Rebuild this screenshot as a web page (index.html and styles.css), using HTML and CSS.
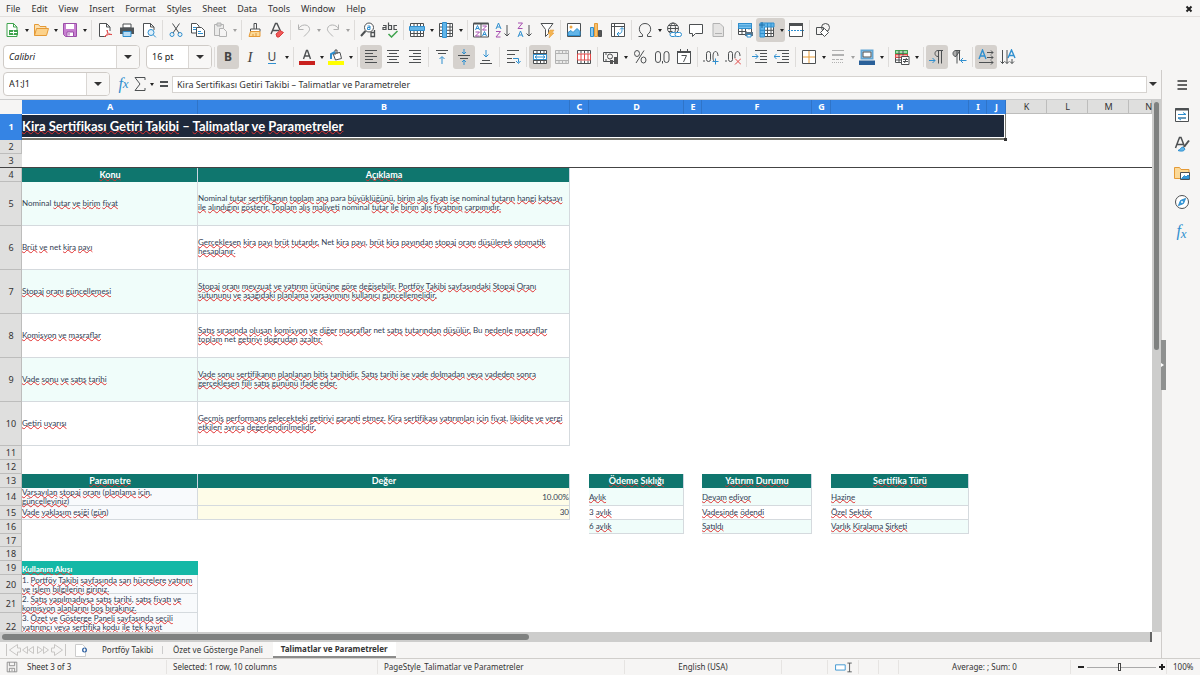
FILE: index.html
```html
<!DOCTYPE html>
<html lang="tr">
<head>
<meta charset="utf-8">
<title>Kira Sertifikası Getiri Takibi</title>
<link rel="stylesheet" href="styles.css">
</head>
<body>
<nav class="menu">
  <button>File</button><button>Edit</button><button>View</button><button>Insert</button><button>Format</button><button>Styles</button><button>Sheet</button><button>Data</button><button>Tools</button><button>Window</button><button>Help</button>
  <button class="close" aria-label="Close document"><svg viewBox="0 0 8 8" class="x"><path d="M1.500 1.500l5 5M6.500 1.500l-5 5"/></svg></button>
</nav>

<div class="bar">
  <button aria-label="New"><svg viewBox="0 0 16 16"><path class="g" d="M3 1.500h6.500l3.500 3.500v9.500h-10z" fill="#fff"/><path class="g" d="M9.500 1.500v3.500h3.500"/><path d="M5 8h9v5h-9z" fill="#3fa34d" stroke="none"/><path stroke="#fff" d="M6 10.500h7M9.500 8.500v4"/></svg></button><button class="arr" aria-label="New options"></button>
  <button aria-label="Open"><svg viewBox="0 0 16 16"><path d="M1.500 13.500v-11h4l1.500 2h6v3" fill="#fbe0b0" class="o"/><path d="M1.500 13.500l2-7h12l-2 7z" fill="#fcd28b" class="o"/></svg></button><button class="arr" aria-label="Open options"></button>
  <button aria-label="Save"><svg viewBox="0 0 16 16"><path d="M1.500 1.500h13v13h-11l-2-2z" fill="#c77fd0" stroke="#9b4fa8"/><path d="M4 2h8v5h-8z" fill="#fff" stroke="none"/><path d="M5 10h6.500v4.500h-6.500z" fill="#fff" stroke="#9b4fa8"/><path stroke="#9b4fa8" d="M7 11v2.500"/></svg></button><button class="arr" aria-label="Save options"></button>
  <i class="sep"></i>
  <button aria-label="Export as PDF"><svg viewBox="0 0 16 16"><path d="M9 14.500h-6.500v-13h7l3.500 3.500v4M9.500 1.500v3.500h3.500" fill="#fff"/><path class="r" d="M7.500 14.500c3-1 3.500-4.500 2.500-6.500c0 3 3 5 5 4.500c-2-.5-5 0-7.500 2z"/></svg></button>
  <button aria-label="Print"><svg viewBox="0 0 16 16"><path d="M4 2h8v4h-8z" fill="#fff"/><path d="M1 5.500h14v6.500h-14z" fill="#505558" stroke="none"/><path d="M4 9.500h8v5h-8z" fill="#b8dcf5" stroke="#2d8ccc"/></svg></button>
  <button aria-label="Print preview"><svg viewBox="0 0 16 16"><path d="M8 14.500h-5.500v-13h7l3.500 3.500v3M9.500 1.500v3.500h3.500" fill="#fff"/><circle class="b" cx="10" cy="10.500" r="3" fill="#dff0fb"/><path class="b" d="M12.300 12.800l2.500 2.500"/></svg></button>
  <i class="sep"></i>
  <button aria-label="Cut"><svg viewBox="0 0 16 16"><path d="M4.500 1.500l6.500 9.500M11.500 1.500l-6.500 9.500"/><circle class="b" cx="4" cy="12.500" r="2"/><circle class="b" cx="12" cy="12.500" r="2"/></svg></button>
  <button aria-label="Copy"><svg viewBox="0 0 16 16"><path d="M1.500 1.500h5l2.500 2.500v7h-7.500z" fill="#fff"/><path d="M6.500 5.500h5l3 3v6h-8z" fill="#fff"/><path class="b" d="M3 5.500h3M3 7.500h3M8 9.500h3M8 11.500h5"/></svg></button>
  <button class="dim" aria-label="Paste"><svg viewBox="0 0 16 16"><path d="M2.500 2.500h9v11h-9z" fill="#ddd"/><path d="M5 1h4v3h-4z" fill="#aaa"/><path d="M7.500 6.500h4l3 3v5h-7z" fill="#f4f4f4"/></svg></button><button class="arr dim" aria-label="Paste options"></button>
  <i class="sep"></i>
  <button aria-label="Clone formatting"><svg viewBox="0 0 16 16"><path d="M7 7v-5.500h2.500v5.500"/><path d="M3.500 9.500v-2.500h9.500v2.500z" fill="#fff"/><path class="o" d="M3.500 9.500h9.500v5h-11z" fill="#fbd998"/><path class="o" d="M6 14v-2M9 14v-3"/></svg></button>
  <button aria-label="Clear formatting"><svg viewBox="0 0 16 16"><path d="M2 12l4.500-10.500h1.500l3.500 7.500M4 8.500h6" stroke-width="1.400"/><path d="M7 12l4-3.500l3.500 2-4.500 4.500h-2z" fill="#ef5a5a" stroke="#dc3b3b"/></svg></button>
  <i class="sep"></i>
  <button class="dim" aria-label="Undo"><svg viewBox="0 0 16 16"><path d="M2.500 2.500v5h5M2.500 7c2-5 10-5.500 11-.5c.5 2-1 3.500-5.500 8"/></svg></button><button class="arr dim" aria-label="Undo options"></button>
  <button class="dim" aria-label="Redo"><svg viewBox="0 0 16 16"><path d="M13.500 2.500v5h-5M13.500 7c-2-5-10-5.500-11-.5c-.5 2 1 3.500 5.500 8"/></svg></button><button class="arr dim" aria-label="Redo options"></button>
  <i class="sep"></i>
  <button aria-label="Find and replace"><svg viewBox="0 0 16 16"><circle cx="9" cy="5.500" r="4.500" fill="#fff"/><path d="M5.500 9l-4.500 5" stroke-width="2"/><path class="b" d="M7.500 4h2.500v3.500h-2.500v-2h2.500"/><path d="M14.500 8v6.500h-3.500v-4h3.500" stroke-width="1.300"/></svg></button>
  <button aria-label="Spelling"><svg viewBox="0 0 16 16"><path stroke-width="1.200" d="M1 3.500h3v4h-3v-2h3M6.500 .5v7h3v-4h-3M15 3.500h-3v4h3"/><path class="g" stroke-width="1.500" d="M6.500 12l3 3l6-6"/></svg></button>
  <i class="sep"></i>
  <button aria-label="Row"><svg viewBox="0 0 16 16"><path d="M1.500 1.500h13v13h-13zM1.500 11.500h13M5 1.500v13M8.300 1.500v13M11.500 1.500v13" fill="#fff"/><path class="b" d="M.5 4.500h15v4h-15z" fill="#62b5e8"/></svg></button><button class="arr" aria-label="Row options"></button>
  <button aria-label="Column"><svg viewBox="0 0 16 16"><path d="M1.500 1.500h13v13h-13zM1.500 5h13M1.500 8.300h13M1.500 11.500h13M12 1.500v13" fill="#fff"/><path class="b" d="M4.500 .5h4v15h-4z" fill="#62b5e8"/></svg></button><button class="arr" aria-label="Column options"></button>
  <i class="sep"></i>
  <button aria-label="Sort"><svg viewBox="0 0 16 16"><path d="M.5 1.500h15v13.500h-15zM8 2v13" fill="#fff"/><path d="M.5 1.500h15" stroke-width="2"/><path class="b" d="M2.500 8l2-4.500l2 4.500M3 6.500h3M9.500 14l2-4.500l2 4.500M10 12.500h3"/><path class="p" d="M9.500 4h4l-4 4h4M2.500 10h4l-4 4h4"/></svg></button>
  <button aria-label="Sort ascending"><svg viewBox="0 0 16 16"><path class="b" d="M1 7l2.500-6l2.500 6M2 5h3"/><path class="p" d="M1 9.500h4.500l-4.500 5.500h4.500"/><path d="M12 3v11M9.500 11.500l2.500 2.500l2.500-2.500"/></svg></button>
  <button aria-label="Sort descending"><svg viewBox="0 0 16 16"><path class="p" d="M1 1h4.500l-4.500 5.500h4.500"/><path class="b" d="M1 15l2.500-6l2.500 6M2 13h3"/><path d="M12 3v11M9.500 11.500l2.500 2.500l2.500-2.500"/></svg></button>
  <button aria-label="AutoFilter"><svg viewBox="0 0 16 16"><path d="M2 1.500h12l-4.500 6v4l-3 3v-7z" fill="#fff"/><path d="M11 8h4l-2 3h2l-5 5l1-4h-2z" fill="#f4b453" stroke="#e59a36" stroke-width=".5"/></svg></button>
  <i class="sep"></i>
  <button aria-label="Insert image"><svg viewBox="0 0 16 16"><path d="M1.500 1.500h13v13h-13z" fill="#fff"/><circle cx="5" cy="5" r="1.500" fill="#f0a742" stroke="none"/><path class="b" d="M2 13.500v-3l3-2l2 2l4-4l3 3v4z" fill="#62b5e8"/></svg></button>
  <button aria-label="Insert chart"><svg viewBox="0 0 16 16"><path class="b" d="M2.500 5.500h3v9h-3z" fill="#8ac8ef"/><path class="o" d="M6.500 1.500h3v13h-3z" fill="#f7c06c"/><path d="M10.500 8.500h3v6h-3z" fill="#555"/></svg></button>
  <button aria-label="Insert pivot table"><svg viewBox="0 0 16 16"><path d="M1.500 1.500h13v13h-13zM1.500 4.500h13M4.500 1.500v13" fill="#fff"/><path class="b" d="M7 12c5 0 5-2 5-6M10 7.500l2-2l2 2M9 10l-2 2l2 2"/></svg></button>
  <i class="sep"></i>
  <button aria-label="Special character"><svg viewBox="0 0 16 16"><path d="M1.500 14.500h4v-2c-5-3-4-11 2.500-11s7.500 8 2.500 11v2h4"/></svg></button><button class="arr" aria-label="Character options"></button>
  <button aria-label="Hyperlink"><svg viewBox="0 0 16 16"><circle cx="7" cy="6.500" r="5.500"/><ellipse cx="7" cy="6.500" rx="2.500" ry="5.500"/><path d="M1.500 6.500h11M2.500 3.500h9M2.500 9.500h4"/><rect class="b" x="4" y="10.500" width="6.500" height="4" rx="2" fill="#fff"/><rect class="b" x="9" y="10.500" width="6.500" height="4" rx="2" fill="#fff"/></svg></button>
  <button aria-label="Comment"><svg viewBox="0 0 16 16"><path d="M1.500 2.500h13v9h-7l-3 3v-3h-3z" fill="#fff"/></svg></button>
  <button class="dim" aria-label="Headers and footers"><svg viewBox="0 0 16 16"><path d="M3 1.500h7l3.500 3.500v9.500h-10.500z" fill="#ccc"/><path d="M5 11.500h7"/></svg></button>
  <i class="sep"></i>
  <button aria-label="Print area"><svg viewBox="0 0 16 16"><path d="M1.500 1.500h13v11h-13zM1.500 9.500h8M5 1.500v11M8.500 1.500v11M12 1.500v6" fill="#fff"/><path class="b" d="M1.500 1.500h13v5h-13zM1.500 4h13" fill="#7cc3ee"/><path d="M8 10h8v4h-8z" fill="#5b7487" stroke="none"/><path class="b" d="M10 12.500h4v2.500h-4z" fill="#fff"/></svg></button>
  <span class="pair on"><button aria-label="Freeze rows and columns"><svg viewBox="0 0 16 16"><path d="M1.500 1.500h13v13h-13z" fill="#fff"/><path d="M8.500 5v9.500M12 5v9.500M5 8.300h9.500M5 11.500h9.500"/><path d="M1 1h14v4h-9.500v10h-4.500z" fill="#62b5e8" class="b"/><path class="b" d="M8.500 1v4M12 1v4M1 8.300h4M1 11.500h4"/><path d="M3 0v6M0 3h6" stroke="#1c6ea8"/></svg></button><button class="arr" aria-label="Freeze options"></button></span>
  <button aria-label="Split window"><svg viewBox="0 0 16 16"><path d="M1.500 1.500h13v13h-13z" fill="#fff"/><path d="M1 2.500h14" stroke-width="3"/><path class="b" stroke-dasharray="2 1" d="M0 8.500h16"/></svg></button>
  <i class="sep"></i>
  <button aria-label="Show draw functions"><svg viewBox="0 0 16 16"><circle cx="10.500" cy="5.500" r="4"/><path d="M1.500 5.500h7v7h-7z" /><path d="M9.500 6.500l4 4l-4 4l-4-4z" fill="#fff"/></svg></button>
</div>

<div class="bar fmt">
  <div class="combo font"><input aria-label="Font name" value="Calibri"><button class="drop" aria-label="Font list"></button></div>
  <div class="combo size"><input aria-label="Font size" value="16 pt"><button class="drop" aria-label="Size list"></button></div>
  <i class="sep"></i>
  <button class="on let" aria-label="Bold"><b>B</b></button>
  <button class="let" aria-label="Italic"><em>I</em></button>
  <button class="let" aria-label="Underline"><span class="under">U</span></button><button class="arr" aria-label="Underline options"></button>
  <i class="sep"></i>
  <button aria-label="Font color"><svg viewBox="0 0 16 16"><path d="M4.500 10l3-8.500h1l3 8.500M5.500 7h5" stroke-width="1.400"/><path d="M0 12h16v4h-16z" fill="#c9211e" stroke="none"/></svg></button><button class="arr" aria-label="Font color options"></button>
  <button aria-label="Fill color"><svg viewBox="0 0 16 16"><path d="M5 4.500l7-1l1.500 6l-6 1.500z" fill="#fff"/><path d="M7 6v-5h2v4"/><path class="b" stroke-width="2" d="M3 10v-5l4-2"/><path d="M0 12h16v4h-16z" fill="#ff0" stroke="none"/></svg></button><button class="arr" aria-label="Fill color options"></button>
  <i class="sep"></i>
  <button class="on" aria-label="Align left"><svg viewBox="0 0 16 16"><path d="M2 1.500h12M2 4.500h8M2 7.500h12M2 10.500h8M2 13.500h12"/></svg></button>
  <button aria-label="Align center"><svg viewBox="0 0 16 16"><path d="M2 1.500h12M4 4.500h8M2 7.500h12M4 10.500h8M2 13.500h12"/></svg></button>
  <button aria-label="Align right"><svg viewBox="0 0 16 16"><path d="M2 1.500h12M6 4.500h8M2 7.500h12M6 10.500h8M2 13.500h12"/></svg></button>
  <i class="sep"></i>
  <button aria-label="Align top"><svg viewBox="0 0 16 16"><path d="M2 1.500h12M4 4.500h8"/><path class="b" d="M8 15v-7M5.500 10l2.500-2.500l2.500 2.500"/></svg></button>
  <button class="on" aria-label="Center vertically"><svg viewBox="0 0 16 16"><path d="M2 6.500h12M4 9.500h8"/><path class="b" d="M8 0v4.500M6 3l2 2l2-2M8 16v-4.500M6 13l2-2l2 2"/></svg></button>
  <button aria-label="Align bottom"><svg viewBox="0 0 16 16"><path d="M4 11.500h8M2 14.500h12"/><path class="b" d="M8 1v7M5.500 5.500l2.500 2.500l2.500-2.500"/></svg></button>
  <i class="sep"></i>
  <button aria-label="Wrap text"><svg viewBox="0 0 16 16"><path d="M2 1.500h12M2 5.500h8M2 9.500h5M2 13.500h8"/><path class="b" d="M8 9.500h5.500v4M11 12l2.500 2.500l2-2.500"/></svg></button>
  <i class="sep"></i>
  <button class="on" aria-label="Merge and center"><svg viewBox="0 0 16 16"><path d="M1.500 1.500h13v13h-13zM1.500 4.500h13M1.500 11.500h13M5 1.500v3M8.500 1.500v3M12 1.500v3M5 11.500v3M8.500 11.500v3M12 11.500v3" fill="#fff"/><path class="b" d="M1.500 5.500h13v5h-13zM3 8h10M5 6.500l-2 1.500l2 1.500M11 6.500l2 1.500l-2 1.500" fill="#fff"/></svg></button>
  <button class="dim" aria-label="Merge cells"><svg viewBox="0 0 16 16"><path d="M1.500 1.500h13v13h-13zM1.500 4.500h13M1.500 11.500h13M5 1.500v3M8.500 1.500v3M12 1.500v3M5 11.500v3M8.500 11.500v3M12 11.500v3" fill="#ddd"/></svg></button>
  <button aria-label="Unmerge cells"><svg viewBox="0 0 16 16"><path d="M1.500 1.500h13v13h-13zM5 1.500v3M8.500 1.500v3M12 1.500v3M5 11.500v3M8.500 11.500v3M12 11.500v3" fill="#fff"/><path class="r" d="M1.500 5h13v6h-13zM5 5v6M8.500 5v6M12 5v6"/></svg></button>
  <i class="sep"></i>
  <button aria-label="Currency"><svg viewBox="0 0 16 16"><path d="M.5 3.500h14v9h-14z"/><circle cx="7" cy="7.500" r="2.500"/><path d="M2 5h2M2 11h2"/><path d="M7 11h3v4h-3zM11 8h4v7h-4z" fill="#555" stroke="none"/></svg></button><button class="arr" aria-label="Currency options"></button>
  <button aria-label="Percent"><svg viewBox="0 0 16 16"><ellipse cx="5" cy="4.500" rx="2.500" ry="3"/><ellipse cx="11.500" cy="11" rx="2.500" ry="3"/><path d="M12 1.500l-8 12.500"/></svg></button>
  <button aria-label="Number"><svg viewBox="0 0 16 16"><rect x="1.500" y="2.500" width="5" height="11" rx="2.500"/><rect x="10" y="2.500" width="5" height="11" rx="2.500"/><path d="M8.500 12v2.500"/></svg></button>
  <button aria-label="Date"><svg viewBox="0 0 16 16"><path d="M1.500 2.500h13v12h-13z" fill="#fff"/><path d="M1 3h14" stroke-width="2"/><path d="M4.500 0v3M11.500 0v3M5.500 6.500h5l-3 6.500"/></svg></button>
  <i class="sep"></i>
  <button aria-label="Add decimal place"><svg viewBox="0 0 16 16"><rect x="3.500" y="2.500" width="4" height="10" rx="2"/><path d="M11 12c-1-1-1-2-1-5c0-6 5-6 5 0M1 11v2"/><path class="b" d="M12.500 9.500v6M9.500 12.500h6"/></svg></button>
  <button aria-label="Delete decimal place"><svg viewBox="0 0 16 16"><rect x="3.500" y="2.500" width="4" height="10" rx="2"/><path d="M10 9c-1-8 5-8.500 5-2M1 11v2"/><path class="r" d="M10 9.500l6 6M16 9.500l-6 6"/></svg></button>
  <i class="sep"></i>
  <button aria-label="Increase indent"><svg viewBox="0 0 16 16"><path d="M3 1.500h12M8 4.500h7M8 7.500h7M8 10.500h7M3 13.500h12"/><path class="b" d="M0 7.500h6M3.500 5l2.500 2.500l-2.500 2.500"/></svg></button>
  <button aria-label="Decrease indent"><svg viewBox="0 0 16 16"><path d="M3 1.500h12M8 4.500h7M8 7.500h7M8 10.500h7M3 13.500h12"/><path class="b" d="M0 7.500h6M2.500 5l-2.500 2.500l2.500 2.500"/></svg></button>
  <i class="sep"></i>
  <button aria-label="Borders"><svg viewBox="0 0 16 16"><path d="M1.500 1.500h13v13h-13z" fill="#fff"/><path class="o" d="M8 2v12M2 8h12"/></svg></button><button class="arr" aria-label="Border options"></button>
  <button class="dim" aria-label="Border style"><svg viewBox="0 0 16 16"><path d="M2 1.500h12M2 5.500h12M2 6.500h12"/><path stroke-dasharray="3 1" d="M2 10.500h12"/><path stroke-dasharray="1 1" d="M2 13.500h12"/></svg></button><button class="arr dim" aria-label="Style options"></button>
  <button aria-label="Border color"><svg viewBox="0 0 16 16"><path d="M2.500 1.500h11v8h-11z" fill="#fff" stroke="#62a6d4" stroke-width="2"/><path d="M4 3h8v5h-8z"/><path d="M0 11.500h16v4.500h-16z" fill="#2a6099" stroke="none"/></svg></button><button class="arr" aria-label="Border color options"></button>
  <i class="sep"></i>
  <button aria-label="Conditional formatting"><svg viewBox="0 0 16 16"><path d="M1.500 1.500h12v12h-12z" fill="#fff"/><path d="M1.500 1.500h12v3h-12z" fill="#a5dcae" stroke="#3fa34d"/><path d="M1.500 5.500h12v3h-12z" fill="#f9b3ad" class="r"/><path d="M1.500 11h6M5 1.500v12M9 1.500v5"/><path d="M7.500 7.500h7.500v8h-7.500z" fill="#fff"/><path d="M9 10.500h5M9 12.500h5M12.500 9l-2 5"/></svg></button><button class="arr" aria-label="Conditional options"></button>
  <i class="sep"></i>
  <button class="on" aria-label="Left to right"><svg viewBox="0 0 16 16"><path d="M14 1.500h-5c-4 0-4 6 0 6M9.500 1.500v13M12.500 1.500v13"/><path class="b" d="M0 11.500h6M3.500 9l2.500 2.500l-2.500 2.500"/></svg></button>
  <button aria-label="Right to left"><svg viewBox="0 0 16 16"><path d="M9 1.500h-4c-4 0-4 6 0 6z" fill="#aaa"/><path d="M6 1.500v13M8.500 1.500v10"/><path class="b" d="M9.500 11.500h6M12 9l-2.500 2.500l2.500 2.500"/></svg></button>
  <i class="sep"></i>
  <button class="on" aria-label="Horizontal text"><svg viewBox="0 0 16 16"><path class="b" stroke-width="1.400" d="M1 10l3.500-9l3.500 9M2 7h5"/><path d="M9 3.500h6M9 8.500h6M1 13.500h14M13 1.500l2 2l-2 2M13 6.500l2 2l-2 2M13 11.500l2 2l-2 2"/></svg></button>
  <button aria-label="Vertical text"><svg viewBox="0 0 16 16"><path class="b" stroke-width="1.400" d="M8 9l3.500-8l3.500 8M9 6.500h5"/><path d="M2.500 1v13.500M7 1v13.500M12 10v4.500M.5 12.500l2 2l2-2M5 12.500l2 2l2-2M10 12.500l2 2l2-2"/></svg></button>
</div>

<main class="work">
  <section class="left">
    <div class="formula">
      <div class="combo name"><input aria-label="Name box" value="A1:J1"><button class="drop" aria-label="Names"></button></div>
      <button class="fx" aria-label="Function wizard">f<sub>x</sub></button>
      <button aria-label="Select function"><svg viewBox="0 0 16 16"><path d="M13 4v-2.500h-10l5 6.500l-5 6.500h10v-2.500"/></svg></button><button class="arr" aria-label="Function options"></button>
      <button class="eq" aria-label="Formula"><svg viewBox="0 0 16 16"><path stroke-width="2" d="M4 6h8M4 10h8"/></svg></button>
      <input class="line" aria-label="Input line" value="Kira Sertifikası Getiri Takibi – Talimatlar ve Parametreler">
      <button class="drop" aria-label="Expand formula bar"></button>
    </div>
    <div class="sheet">
      <div class="grid">
        <table>
          <colgroup><col class="w22"><col class="w176"><col class="w372"><col class="w19"><col class="w95"><col class="w18"><col class="w110"><col class="w19"><col class="w138"><col class="w18"><col class="w19"><col class="w41"><col class="w41"><col class="w41"><col></colgroup>
          <thead><tr class="h14"><td class="corner"></td><th class="s">A</th><th class="s">B</th><th class="s">C</th><th class="s">D</th><th class="s">E</th><th class="s">F</th><th class="s">G</th><th class="s">H</th><th class="s">I</th><th class="s">J</th><th>K</th><th>L</th><th>M</th><th class="cut">N</th></tr></thead>
          <tbody>
          <tr class="h26"><th class="s">1</th><td colspan="10" class="title"><u>Kira Sertifikası Getiri Takibi</u> – <u>Talimatlar</u> <u>ve</u> <u>Parametreler</u></td><td colspan="4"></td></tr>
          <tr class="h14"><th>2</th><td colspan="14"></td></tr>
          <tr class="h14 freeze"><th>3</th><td colspan="14"></td></tr>
          <tr class="h14"><th>4</th><td class="head"><u>Konu</u></td><td class="head"><u>Açıklama</u></td><td colspan="12"></td></tr>
          <tr class="h44 mint"><th>5</th><td class="c">Nominal <u>tutar</u> <u>ve</u> <u>birim</u> <u>fiyat</u></td><td class="c">Nominal <u>tutar</u> <u>sertifikanın</u> <u>toplam</u> <u>ana</u> para <u>büyüklüğünü</u>, <u>birim</u> <u>alış</u> <u>fiyatı</u> <u>ise</u> nominal <u>tutarın</u> <u>hangi</u> <u>katsayı</u><br><u>ile</u> <u>alındığını</u> <u>gösterir.</u> <u>Toplam</u> <u>alış</u> <u>maliyeti</u> nominal <u>tutar</u> <u>ile</u> <u>birim</u> <u>alış</u> <u>fiyatının</u> <u>çarpımıdır.</u></td><td colspan="12"></td></tr>
          <tr class="h44"><th>6</th><td class="c"><u>Brüt</u> <u>ve</u> net <u>kira</u> <u>payı</u></td><td class="c"><u>Gerçekleşen</u> <u>kira</u> <u>payı</u> <u>brüt</u> <u>tutardır.</u> Net <u>kira</u> <u>payı</u>, <u>brüt</u> <u>kira</u> <u>payından</u> <u>stopaj</u> <u>oranı</u> <u>düşülerek</u> <u>otomatik</u><br><u>hesaplanır.</u></td><td colspan="12"></td></tr>
          <tr class="h44 mint"><th>7</th><td class="c"><u>Stopaj</u> <u>oranı</u> <u>güncellemesi</u></td><td class="c"><u>Stopaj</u> <u>oranı</u> <u>mevzuat</u> <u>ve</u> <u>yatırım</u> <u>ürününe</u> <u>göre</u> <u>değişebilir.</u> <u>Portföy</u> <u>Takibi</u> <u>sayfasındaki</u> <u>Stopaj</u> <u>Oranı</u><br><u>sütununu</u> <u>ve</u> <u>aşağıdaki</u> <u>planlama</u> <u>varsayımını</u> <u>kullanıcı</u> <u>güncellemelidir.</u></td><td colspan="12"></td></tr>
          <tr class="h44"><th>8</th><td class="c"><u>Komisyon</u> <u>ve</u> <u>masraflar</u></td><td class="c"><u>Satış</u> <u>sırasında</u> <u>oluşan</u> <u>komisyon</u> <u>ve</u> <u>diğer</u> <u>masraflar</u> net <u>satış</u> <u>tutarından</u> <u>düşülür.</u> Bu <u>nedenle</u> <u>masraflar</u><br><u>toplam</u> net <u>getiriyi</u> <u>doğrudan</u> <u>azaltır.</u></td><td colspan="12"></td></tr>
          <tr class="h44 mint"><th>9</th><td class="c"><u>Vade</u> <u>sonu</u> <u>ve</u> <u>satış</u> <u>tarihi</u></td><td class="c"><u>Vade</u> <u>sonu</u> <u>sertifikanın</u> <u>planlanan</u> <u>bitiş</u> <u>tarihidir.</u> <u>Satış</u> <u>tarihi</u> <u>ise</u> <u>vade</u> <u>dolmadan</u> <u>veya</u> <u>vadeden</u> <u>sonra</u><br><u>gerçekleşen</u> <u>fiili</u> <u>satış</u> <u>gününü</u> <u>ifade</u> <u>eder.</u></td><td colspan="12"></td></tr>
          <tr class="h44"><th>10</th><td class="c"><u>Getiri</u> <u>uyarısı</u></td><td class="c"><u>Geçmiş</u> <u>performans</u> <u>gelecekteki</u> <u>getiriyi</u> <u>garanti</u> <u>etmez.</u> <u>Kira</u> <u>sertifikası</u> <u>yatırımları</u> <u>için</u> <u>fiyat</u>, <u>likidite</u> <u>ve</u> <u>vergi</u><br><u>etkileri</u> <u>ayrıca</u> <u>değerlendirilmelidir.</u></td><td colspan="12"></td></tr>
          <tr class="h14"><th>11</th><td colspan="14"></td></tr>
          <tr class="h14"><th>12</th><td colspan="14"></td></tr>
          <tr class="h14"><th>13</th><td class="head"><u>Parametre</u></td><td class="head">Değer</td><td></td><td class="head"><u>Ödeme</u> <u>Sıklığı</u></td><td></td><td class="head"><u>Yatırım</u> <u>Durumu</u></td><td></td><td class="head"><u>Sertifika</u> <u>Türü</u></td><td colspan="6"></td></tr>
          <tr class="h18 mint"><th>14</th><td class="c slate"><u>Varsayılan</u> <u>stopaj</u> <u>oranı</u> (<u>planlama</u> <u>için</u>,<br><u>güncelleyiniz</u>)</td><td class="c cream">10.00%</td><td></td><td class="c"><u>Aylık</u></td><td></td><td class="c"><u>Devam</u> <u>ediyor</u></td><td></td><td class="c"><u>Hazine</u></td><td colspan="6"></td></tr>
          <tr class="h14"><th>15</th><td class="c slate"><u>Vade</u> <u>yaklaşım</u> <u>eşiği</u> (<u>gün</u>)</td><td class="c cream">30</td><td></td><td class="c">3 <u>aylık</u></td><td></td><td class="c"><u>Vadesinde</u> <u>ödendi</u></td><td></td><td class="c"><u>Özel</u> <u>Sektör</u></td><td colspan="6"></td></tr>
          <tr class="h14 mint"><th>16</th><td colspan="3"></td><td class="c">6 <u>aylık</u></td><td></td><td class="c"><u>Satıldı</u></td><td></td><td class="c"><u>Varlık</u> <u>Kiralama</u> <u>Şirketi</u></td><td colspan="6"></td></tr>
          <tr class="h13"><th>17</th><td colspan="14"></td></tr>
          <tr class="h14"><th>18</th><td colspan="14"></td></tr>
          <tr class="h14"><th>19</th><td class="flow"><u>Kullanım</u> <u>Akışı</u></td><td colspan="13"></td></tr>
          <tr class="h19"><th>20</th><td class="c slate">1. <u>Portföy</u> <u>Takibi</u> <u>sayfasında</u> <u>sarı</u> <u>hücrelere</u> <u>yatırım</u><br><u>ve</u> <u>işlem</u> <u>bilgilerini</u> <u>giriniz.</u></td><td colspan="13"></td></tr>
          <tr class="h19"><th>21</th><td class="c slate">2. <u>Satış</u> <u>yapılmadıysa</u> <u>satış</u> <u>tarihi</u>, <u>satış</u> <u>fiyatı</u> <u>ve</u><br><u>komisyon</u> <u>alanlarını</u> <u>boş</u> <u>bırakınız.</u></td><td colspan="13"></td></tr>
          <tr class="h28"><th>22</th><td class="c slate">3. <u>Özet</u> <u>ve</u> <u>Gösterge</u> <u>Paneli</u> <u>sayfasında</u> <u>seçili</u><br><u>yatırımcı</u> <u>veya</u> <u>sertifika</u> <u>kodu</u> <u>ile</u> <u>tek</u> <u>kayıt</u><br><u>görünümünü</u> <u>izleyiniz.</u></td><td colspan="13"></td></tr>
          </tbody>
        </table>
      </div>
      <div class="vscroll"><div class="vthumb"></div></div>
    </div>
    <div class="hscroll"><div class="hthumb"></div></div>
    <div class="tabs">
      <svg class="navs" viewBox="0 0 62 14"><path d="M1.500 1v12M12.500 1.500l-8 5.500l8 5.500v-3.500h3v-4h-3zM22.500 3.500v7l-5-3.500zM28.500 3.500v7l-5-3.500zM32.500 3.500v7l5-3.500zM38.500 3.500v7l5-3.500zM49.500 1.500l8 5.500l-8 5.500v-3.500h-3v-4h3zM60.500 1v12"/></svg>
      <button class="add" aria-label="Add sheet"><svg viewBox="0 0 16 14"><path d="M2.500 1.500h7l3 3v9h-10z" fill="#fff" stroke="#ccc"/><circle cx="11.500" cy="7" r="2.500" fill="#3465a4" stroke="none"/><path stroke="#fff" d="M11.500 5.500v3M10 7h3"/></svg></button>
      <button class="tab">Portföy Takibi</button><button class="tab bar-l">Özet ve Gösterge Paneli</button><button class="tab active">Talimatlar ve Parametreler</button>
    </div>
  </section>
  <aside class="side">
    <button class="handle" aria-label="Hide sidebar"></button>
    <button aria-label="Sidebar settings"><svg viewBox="0 0 16 16"><path stroke-width="1.500" d="M3.500 4h9.500M3.500 8h9.500M3.500 12h9.500" stroke="#333"/></svg></button>
    <button aria-label="Properties"><svg viewBox="0 0 16 16"><path d="M1.500 1.500h13v13h-13z" fill="#fff"/><path stroke-width="2" d="M1 2.500h14"/><path d="M4 7.500h8M4 11h8"/><path class="b" d="M9 5.500l3 2h-8M7 13l-3-2h8"/></svg></button>
    <button aria-label="Styles"><svg viewBox="0 0 16 16"><path d="M1.500 12l4-10.500h1.500l3.500 9M3 8.500h6" stroke-width="1.500"/><path d="M15 4.500l-5 6.500" stroke-width="2"/><path class="b" d="M4 14.500c3-1 2-3 5-3.500l2 2c-1 2.500-4 2.500-7 1.500z" fill="#62b5e8"/></svg></button>
    <button aria-label="Gallery"><svg viewBox="0 0 16 16"><path class="o" d="M.5 13.500v-11h5l1.500 2h8v9z" fill="#fbd998"/><path d="M6.500 7.500h9v7h-9z" fill="#fff"/><path class="b" d="M7.500 13.500l3-3l1.500 1.500l2-2l1 1v2.500z" fill="#3a9ad9"/></svg></button>
    <button aria-label="Navigator"><svg viewBox="0 0 16 16"><circle cx="8" cy="8" r="6.500" fill="#fff"/><path class="b" d="M11.500 4.500l-2 5l-5 2l2-5z" fill="#3a9ad9"/><circle cx="8" cy="8" r="1" fill="#fff" stroke="none"/></svg></button>
    <button class="fx" aria-label="Functions">f<sub>x</sub></button>
  </aside>
</main>

<footer class="status">
  <span class="ic"><svg viewBox="0 0 16 16"><path stroke="#888" d="M2.500 2.500h11v11h-11zM5 2.500v4h6v-4M5 13.500v-4h6v4M7 11.500h2"/></svg></span>
  <span>Sheet 3 of 3</span><span>Selected: 1 row, 10 columns</span><span>PageStyle_Talimatlar ve Parametreler</span><span class="mid">English (USA)</span><span></span>
  <span class="ic"><svg class="wide" viewBox="0 0 22 16"><path class="b" d="M2.500 5.500h11v6h-11z" fill="#fff"/><path d="M16 3.500h5M16 13.500h5M18.500 3.500v10"/></svg></span><span></span><span></span><span class="mid">Average: ; Sum: 0</span>
  <span class="zoom"><button aria-label="Zoom out"><svg viewBox="0 0 8 8"><path d="M1 4h6"/></svg></button><input type="range" min="0" max="100" value="47" aria-label="Zoom"><button aria-label="Zoom in"><svg viewBox="0 0 8 8"><path d="M1 4h6M4 1v6"/></svg></button></span><span class="pct">100%</span>
</footer>
</body>
</html>
```
FILE: styles.css
```css
* { box-sizing: border-box; }
body {
  margin: 0;
  height: 100vh;
  display: flex;
  flex-direction: column;
  overflow: hidden;
  background: #f6f5f4;
  color: #333;
  font: 9px/12px "Noto Sans", sans-serif;
}
button, input { font: inherit; color: inherit; margin: 0; padding: 0; border: 0; background: none; }
svg { display: block; width: 16px; height: 16px; fill: none; stroke: #4d5052; }
.b { stroke: #2f8fcf; }
.o { stroke: #e59a36; }
.g { stroke: #3fa34d; }
.r { stroke: #e04848; }
.p { stroke: #a64fb0; }

.menu { display: flex; align-items: center; gap: 11px; height: 17px; padding: 1px 7px 0 6px; flex: none; border-bottom: 1px solid #e2e0de; }
.close { margin-left: auto; }
.close svg { width: 8px; height: 8px; stroke: #222; stroke-width: 2; }

.bar { display: flex; align-items: center; height: 27px; flex: none; padding: 0 0 1px 1px; }
.bar button { flex: none; display: flex; align-items: center; justify-content: center; width: 22px; height: 24px; border-radius: 3px; }
.bar .arr, .formula .arr { width: 7px; flex: none; }
.arr::after { content: ""; border: 2px solid transparent; border-top: 3px solid #222; border-bottom: 0; }
.dim { opacity: .4; }
.on, .bar button.on { background: #d5d1cd; }
.pair { display: flex; border-radius: 3px; }
.sep { flex: none; width: 5px; height: 20px; background: linear-gradient(#dedcda, #dedcda) center / 1px 100% no-repeat; }
.arr + .sep { width: 6px; }
.fmt { padding: 0 0 0 3px; height: 26px; }
.let { font-size: 12px; color: #444; }
.let em { font-family: "Liberation Serif", serif; font-size: 15px; }
.under { border-bottom: 1px solid #2f8fcf; line-height: 13px; }

.combo { display: flex; flex: none; height: 24px; border: 1px solid #cfcbc7; border-radius: 4px; background: #fff; overflow: hidden; }
.combo input { flex: 1; min-width: 0; padding-left: 5px; color: #222; }
.combo .drop { width: 23px; height: 100%; border-radius: 0; border-left: 1px solid #dad7d4; background: #f8f7f6; }
.drop { display: flex; align-items: center; justify-content: center; }
.drop::after { content: ""; border: 4px solid transparent; border-top-color: #333; border-bottom: 0; }
.font { width: 137px; margin-right: 6px; }
.font input { font-style: italic; }
.size { width: 66px; }
.name { width: 107px; }

.work { flex: 1; min-height: 0; display: flex; }
.left { flex: 1; min-width: 0; display: flex; flex-direction: column; }
.formula { display: flex; align-items: center; flex: none; height: 29px; padding: 0 4px 1px 3px; }
.formula button { flex: none; height: 22px; display: flex; align-items: center; justify-content: center; }
.formula .combo .drop { height: 100%; }
.formula > .fx { margin-left: 5px; width: 17px; }
.fx { color: #2f8fcf; font: italic 16px/16px "Liberation Serif", serif; }
.fx sub { font-size: 13px; line-height: 10px; vertical-align: -2px; }
.eq { margin-left: 1px; }
.line { flex: 1; min-width: 0; height: 17px; margin-right: 2px; padding-left: 4px; border: 1px solid #d6d3d0; background: #fff; }

.sheet { flex: 1; min-height: 0; display: flex; border-top: 1px solid #ccc; }
.grid { flex: 1; min-width: 0; overflow: hidden; background: #fff; }
table { width: 100%; table-layout: fixed; border-collapse: separate; border-spacing: 0; }
td, th { padding: 0; white-space: nowrap; }
th { background: #dfdfde; box-shadow: inset -1px -1px #bdbdbc; font-weight: 400; color: #333; line-height: 12px; }
th.s { background: #3584e4; color: #fff; font-weight: 700; box-shadow: inset -1px 0 #2f74c8; }
th.cut { text-align: right; }
.corner { background: #f6f5f4; }
td { font: 8px/9px Lato, sans-serif; color: #334155; }
u { text-decoration: underline wavy #e03030 1px; text-decoration-skip-ink: none; text-underline-offset: -1px; }
.title { position: relative; padding: 0 0 3px; background: #1e293b; color: #fff; font-size: 13px; font-weight: 700; line-height: 16px; box-shadow: inset -1px -2px #77776f, inset -2px -3px #fff, inset 0 1px #fff; }
.title::after { content: ""; position: absolute; right: -1px; bottom: -1px; width: 3px; height: 3px; background: #333; }
.freeze td, .freeze th { box-shadow: inset 0 -1px #444; }
.head { background: #0f766e; color: #fff; font-size: 9px; font-weight: 700; text-align: center; padding-bottom: 2px; box-shadow: inset -1px 0 #cbd5e1; }
.flow { background: #14b8a6; color: #fff; font-weight: 700; padding: 2px 0 0; }
.c { box-shadow: inset -1px -1px #d5dade; }
.h14 .c, .h44 .c { padding-bottom: 2px; }
.mint .c { background: #f0fdfa; }
.c.slate, .mint .c.slate { background: #f8fafc; }
.c.cream, .mint .c.cream { background: #fefce8; text-align: right; padding-right: 1px; }
.h13 { height: 13px; } .h14 { height: 14px; } .h18 { height: 18px; } .h19 { height: 19px; }
.h26 { height: 26px; } .h28 { height: 28px; } .h44 { height: 44px; }
.w18 { width: 18px; } .w19 { width: 19px; } .w22 { width: 22px; } .w41 { width: 41px; } .w95 { width: 95px; }
.w110 { width: 110px; } .w138 { width: 138px; } .w176 { width: 176px; } .w372 { width: 372px; }

.vscroll { flex: none; width: 9px; padding: 2px 2px; background: #cdcdcc; }
.vthumb { width: 5px; height: 47%; border-radius: 3px; background: #7f8180; }
.hscroll { flex: none; height: 10px; margin-right: 9px; padding: 2px; background: #cdcdcc; border-right: 2px solid #666; }
.hthumb { width: 46%; height: 6px; border-radius: 3px; background: #7f8180; }
.tabs { display: flex; flex: none; height: 16px; padding-left: 5px; font-size: 8px; }
.navs { width: 62px; height: 14px; margin-top: 1px; stroke: #c8c6c4; }
.add { width: 25px; padding-left: 6px; }
.add svg { height: 14px; }
.tab { padding: 0 10px; background: linear-gradient(#ccc, #ccc) right / 1px 8px no-repeat; }
.bar-l { background: none; }
.active { padding: 0 8px; background: #fff; font-weight: 700; border-bottom: 2px solid #8c8c8b; }

.side { position: relative; flex: none; width: 39px; border-left: 1px solid #cfccca; display: flex; flex-direction: column; align-items: center; gap: 13px; padding-top: 7px; }
.side button:not(.handle) { height: 16px; margin-left: 1px; }
.side button:nth-child(2) { margin-bottom: 1px; }
.handle { position: absolute; left: -1px; top: 46%; width: 5px; height: 50px; background: #8f9190; display: flex; align-items: center; }
.handle::after { content: ""; border: 2px solid transparent; border-left: 3px solid #fff; border-right: 0; }

.status { flex: none; height: 17px; font-size: 8px; border-top: 1px solid #d0cecb; display: grid; grid-template-columns: 21px 146fr 211fr 247fr 157fr 46px 31px 20px 20px 172fr 96px 33px; align-items: center; }
.status > span { height: 14px; line-height: 14px; padding-left: 6px; border-right: 1px solid #e6e4e2; white-space: nowrap; }
.status > .ic { padding: 0 0 0 4px; }
.status > .ic:first-child, .status > .pct { border-right: 0; }
.status .mid { text-align: center; padding: 0; }
.status svg { height: 14px; }
.status .wide { width: 22px; }
.zoom { display: flex; align-items: center; gap: 2px; }
.zoom svg, .status .zoom svg { width: 8px; height: 8px; stroke: #222; stroke-width: 2; }
.zoom input { appearance: none; flex: 1; min-width: 0; height: 9px; background: linear-gradient(#aaa, #aaa) center / 100% 1px no-repeat; }
.zoom input::-webkit-slider-thumb { appearance: none; width: 3px; height: 8px; border: 1px solid #444; background: #fff; }
```
